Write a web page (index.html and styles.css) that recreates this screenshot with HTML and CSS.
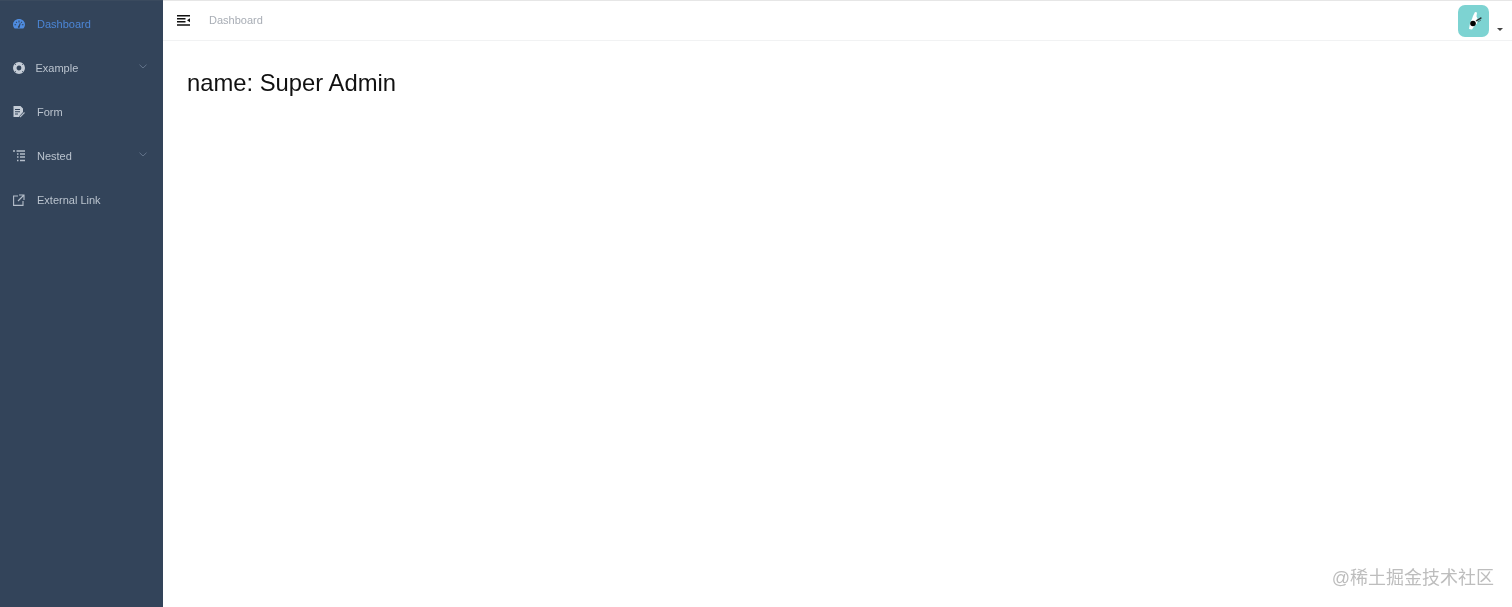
FILE: index.html
```html
<!DOCTYPE html>
<html lang="en">
<head>
<meta charset="utf-8">
<title>Dashboard</title>
<link rel="stylesheet" href="styles.css">
</head>
<body>
<div class="app">
  <aside class="sidebar">
    <a class="item active">
      <svg class="icon" viewBox="0 0 12 10"><path class="fill" fill-rule="evenodd" d="M6 0C2.700 0 0 2.400 0 5.600 0 7.200.7 8.600 1.700 9.600h8.600C11.300 8.600 12 7.200 12 5.600 12 2.400 9.300 0 6 0zM3.200 2.600l1.100.7-.5.8-1.100-.7zM5.500 1.500h1v2h-1zM8.800 2.600l.5.8-1.100.7-.5-.8zM1.500 5.300h1.600v1H1.500zM8.900 5.300h1.600v1H8.900zM6.900 4l.8.4L6.800 7.500a1 1 0 1 1-1.300-.5z"/></svg>
      <span class="label">Dashboard</span>
    </a>
    <a class="item example">
      <svg class="icon icon-lg" viewBox="0 0 12 12"><circle class="ring" cx="6" cy="6" r="4.200"/><path class="cuts" d="M1.600 1.600l1.300 1.300M10.400 1.600 9.100 2.900M1.600 10.400l1.300-1.300M10.400 10.400 9.100 9.100"/></svg>
      <span class="label">Example</span>
      <svg class="chevron" viewBox="0 0 8 5"><path d="M.5.700 4 4 7.500.700"/></svg>
    </a>
    <a class="item">
      <svg class="icon" viewBox="0 0 12 12"><path class="fill" fill-rule="evenodd" d="M.5 0h7L10 2.500V6L6.500 10 6 11H.5zM2 3v1h5V3zM2 5.200v1h5v-1zM2 7.400v1h3v-1z"/><path class="line" d="M7 11l4.500-4.500"/></svg>
      <span class="label">Form</span>
    </a>
    <a class="item">
      <svg class="icon" viewBox="0 0 12 12"><path class="line heavy" d="M0 1h2M3.500 1H12M4 4h1.500M7 4h5M4 7h1.500M7 7h5M4 10.500h1.500M7 10.500h5"/></svg>
      <span class="label">Nested</span>
      <svg class="chevron" viewBox="0 0 8 5"><path d="M.5.700 4 4 7.500.700"/></svg>
    </a>
    <a class="item">
      <svg class="icon" viewBox="0 0 12 12"><path class="line" d="M5 2H.6v9.400H10V7M6 1h5v5M11 1 5 7"/></svg>
      <span class="label">External Link</span>
    </a>
  </aside>
  <div class="main">
    <header class="navbar">
      <svg class="hamburger" viewBox="0 0 13 11"><path d="M0 0h13v1.500H0zM0 3h8.500v1.500H0zM0 6h8.500v1.500H0zM0 9.300h13v1.500H0zM13 3.300v4L10 5.300z"/></svg>
      <span class="crumb">Dashboard</span>
      <div class="account">
        <span class="avatar">
          <svg viewBox="0 0 32 32" width="32" height="32"><path class="fur" d="M11 24l1-6 2-4 1-3 2-4 2 .5-.5 4 1 2-.5 5-3 3-2 3z"/><circle cx="15" cy="18.500" r="2.800"/><path class="paw" d="M18 15.500l5-3 .5.700-5 3zM20 17l3-2"/></svg>
        </span>
        <span class="caret"></span>
      </div>
    </header>
    <main class="content">
      <h1 class="name">name: Super Admin</h1>
    </main>
    <div class="watermark">@稀土掘金技术社区</div>
  </div>
</div>
</body>
</html>
```
FILE: styles.css
```css
* { box-sizing: border-box; }
html, body { margin: 0; height: 100%; }
body { font-family: "Liberation Sans", Arial, sans-serif; background: #fff; overflow: hidden; }
.app { display: flex; height: 607px; }
.sidebar { width: 163px; flex: none; background: #33445a; padding-top: 1px; border-top: 1px solid #3a4a5e; }
.item { display: flex; align-items: center; height: 44px; padding-left: 13px; font-size: 11px; color: #bac3ce; }
.item.active { color: #4c86d6; }
.item.active .fill { fill: #4f8ce0; }
.item .icon { width: 12px; height: 12px; flex: none; margin-right: 12px; }
.item .icon-lg { margin-right: 10.500px; }
.item .label { flex: 1; will-change: opacity; }
.fill { fill: #c4ccd6; }
.line { fill: none; stroke: #b4bdc9; stroke-width: 1.100; }
.line.heavy { stroke-width: 1.400; }
.ring { fill: none; stroke: #c4ccd6; stroke-width: 3.600; }
.cuts { fill: none; stroke: #33445a; stroke-width: .8; }
.chevron { width: 8px; height: 5px; margin-right: 16px; margin-top: -4px; fill: none; stroke: #63748a; stroke-width: 1; }
.main { flex: 1; position: relative; min-width: 0; }
.navbar { display: flex; align-items: center; height: 41px; border-top: 1px solid #e6e6e6; border-bottom: 1px solid #f1f2f3; padding-left: 14px; }
.hamburger { width: 13px; height: 11px; fill: #111; flex: none; }
.crumb { margin-left: 19px; margin-top: -1px; font-size: 11px; color: #a8adb5; will-change: opacity; }
.account { margin-left: auto; display: flex; align-items: flex-end; margin-right: 9px; }
.avatar { width: 31px; height: 32px; border-radius: 7px; background: #7dd3d2; display: block; }
.avatar svg { display: block; }
.fur { fill: #fff; }
.paw { fill: #222; stroke: #222; stroke-width: .5; }
.caret { width: 0; height: 0; margin-left: 8px; margin-bottom: 6px; border: 3px solid transparent; border-top: 3px solid #444; border-bottom: 0; }
.content { padding: 27px 24px; }
.name { margin: 0; font-size: 23.800px; line-height: 30px; font-weight: 400; color: #111; will-change: opacity; }
.watermark { position: absolute; right: 18px; bottom: 18px; font-family: "Liberation Sans", "Noto Sans CJK SC", sans-serif; font-size: 18px; line-height: 22px; color: #bdbdbd; will-change: opacity; }
```
